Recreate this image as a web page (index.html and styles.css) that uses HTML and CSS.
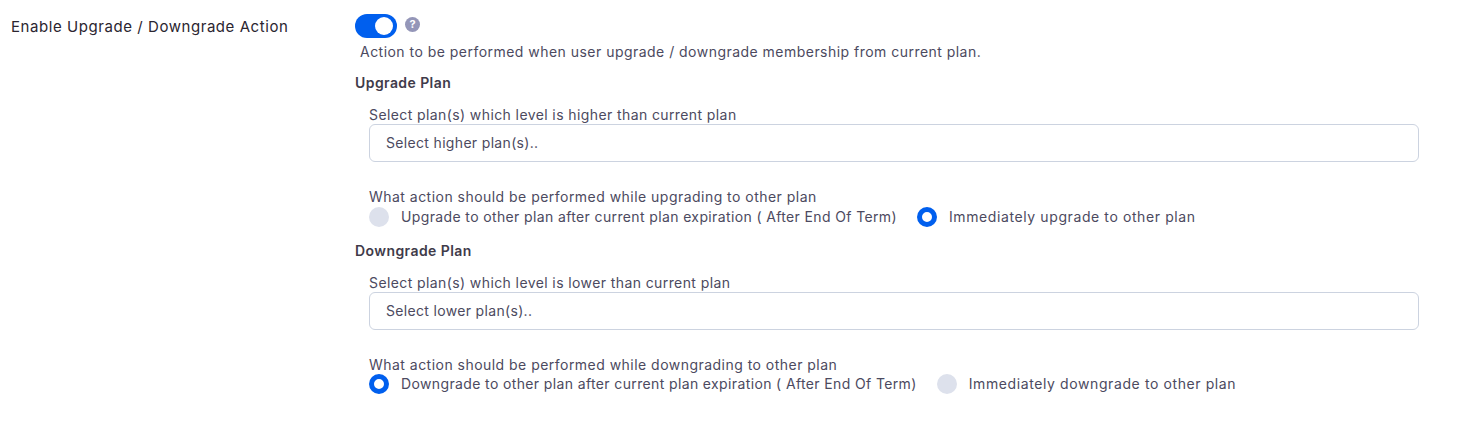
FILE: index.html
```html
<!DOCTYPE html>
<html lang="en">
<head>
<meta charset="utf-8">
<title>Upgrade / Downgrade Action</title>
<link rel="stylesheet" href="styles.css">
</head>
<body>
<div class="row">
  <div class="row-label">Enable Upgrade / Downgrade Action</div>
  <div class="row-body">
    <div class="switch-line">
      <span class="switch"><span class="knob"></span></span>
      <span class="help">?</span>
    </div>
    <p class="desc">Action to be performed when user upgrade / downgrade membership from current plan.</p>

    <h4 class="plan-title first">Upgrade Plan</h4>
    <div class="plan">
      <label class="field-label">Select plan(s) which level is higher than current plan</label>
      <div class="select">Select higher plan(s)..</div>
      <div class="action-label">What action should be performed while upgrading to other plan</div>
      <div class="radios">
        <span class="radio"><span class="dot"></span>Upgrade to other plan after current plan expiration ( After End Of Term)</span>
        <span class="radio short"><span class="dot on"></span>Immediately upgrade to other plan</span>
      </div>
    </div>

    <h4 class="plan-title second">Downgrade Plan</h4>
    <div class="plan">
      <label class="field-label">Select plan(s) which level is lower than current plan</label>
      <div class="select">Select lower plan(s)..</div>
      <div class="action-label">What action should be performed while downgrading to other plan</div>
      <div class="radios last">
        <span class="radio"><span class="dot on"></span>Downgrade to other plan after current plan expiration ( After End Of Term)</span>
        <span class="radio short"><span class="dot"></span>Immediately downgrade to other plan</span>
      </div>
    </div>
  </div>
</div>
</body>
</html>
```

FILE: styles.css
```css
* { box-sizing: border-box; }
html, body { margin: 0; background: #fff; }
body {
  font-family: "Inter", "Open Sans", sans-serif;
  font-size: 14px;
  color: #4c4a60;
  height: 430px;
  overflow: hidden;
}
.row { display: flex; padding: 14px 64px 0 11px; }
.row-label {
  width: 344px;
  flex: none;
  font-size: 15px;
  letter-spacing: .56px;
  line-height: 26px;
  color: #2b2530;
}
.row-body { flex: 1; min-width: 0; }
.switch-line { display: flex; align-items: flex-start; gap: 8px; height: 24px; }
.switch {
  width: 42px; height: 24px; border-radius: 12px;
  background: #005fee; display: block; position: relative;
}
.knob {
  position: absolute; right: 4px; top: 3px;
  width: 18px; height: 18px; border-radius: 50%; background: #fff;
}
.help {
  width: 15px; height: 15px; margin-top: 3px; border-radius: 50%;
  background: #9496b8; color: #fff; font-size: 11px; font-weight: 700;
  line-height: 15px; text-align: center;
}
.desc { margin: 4px 0 0 5px; line-height: 20px; letter-spacing: .47px; }
.plan-title { margin: 0; font-size: 14px; font-weight: 600; line-height: 20px; color: #3f3b4a; letter-spacing: .42px; }
.plan-title.first { margin-top: 11px; }
.plan-title.second { margin-top: 14px; }
.plan { padding-left: 14px; }
.field-label { display: block; margin-top: 12px; line-height: 20px; letter-spacing: .4px; }
.select {
  height: 38px; margin-top: -1px; padding-left: 16px;
  border: 1px solid #ccd3e0; border-radius: 6px;
  line-height: 36px; background: #fff; letter-spacing: .33px;
}
.action-label { margin-top: 25px; line-height: 20px; letter-spacing: .47px; }
.radios { display: flex; gap: 20px; line-height: 20px; }
.radios.last { margin-top: -1px; }
.radio { display: flex; align-items: center; letter-spacing: .37px; }
.radio.short { letter-spacing: .6px; }
.dot {
  width: 20px; height: 20px; border-radius: 50%;
  background: #dde1ec; margin-right: 12px; flex: none;
}
.dot.on { background: #fff; border: 5.5px solid #005fee; }
```
